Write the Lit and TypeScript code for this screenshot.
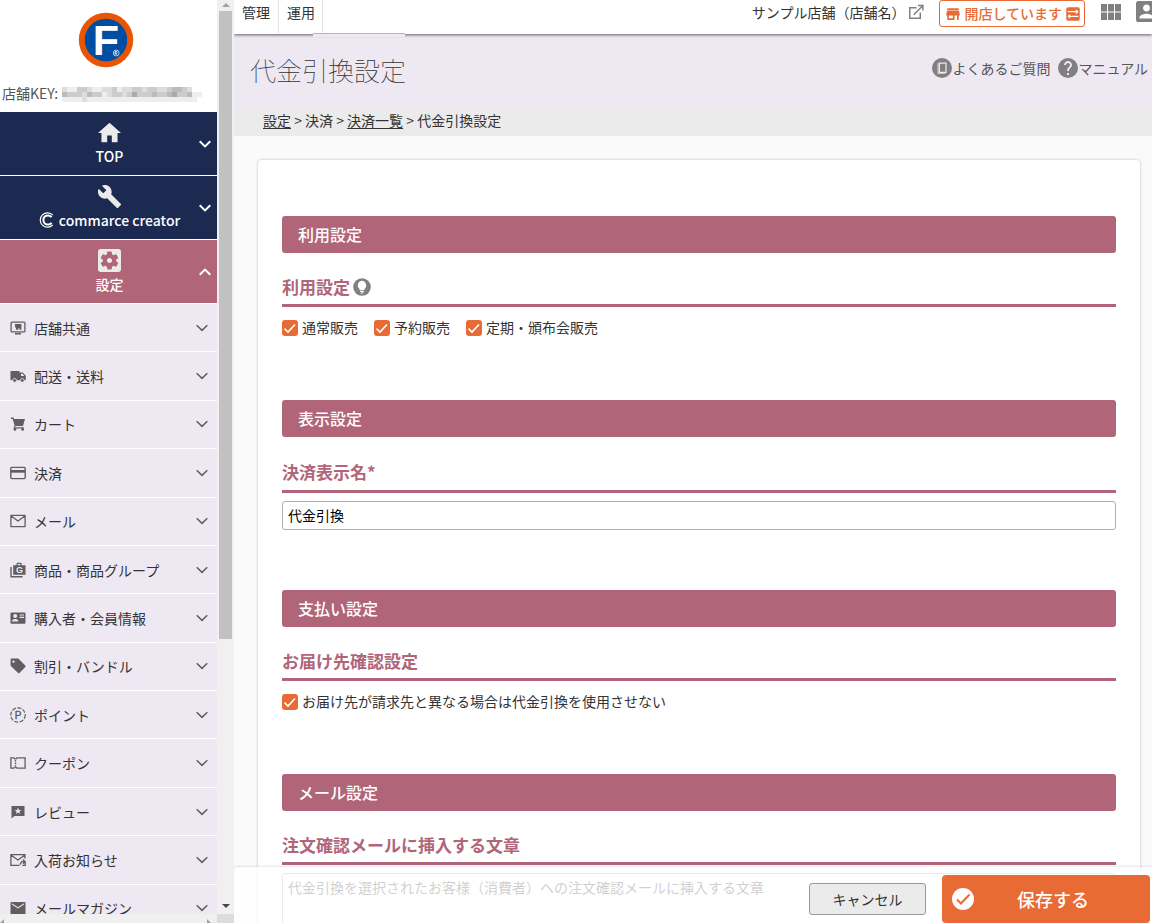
import { LitElement, html, css, svg } from "lit";
import { customElement, property } from "lit/decorators.js";

const icons: Record<string, { box: string; body: unknown }> = {
  home: { box: "2 3 20 17", body: svg`<path d="M10 20v-6h4v6h5v-8h3L12 3 2 12h3v8z"/>` },
  wrench: {
    box: "1 1 22 22",
    body: svg`<path d="M22.7 19l-9.1-9.1c.9-2.3.4-5-1.5-6.9-2-2-5-2.4-7.4-1.3L9 6 6 9 1.6 4.7C.4 7.1.9 10.1 2.9 12.1c1.9 1.9 4.6 2.4 6.9 1.5l9.1 9.1c.4.4 1 .4 1.4 0l2.3-2.3c.5-.4.5-1.1.1-1.4z"/>`,
  },
  gear: {
    box: "3 3 18 18",
    body: svg`<path d="M12 10c-1.1 0-2 .9-2 2s.9 2 2 2 2-.9 2-2-.9-2-2-2zm7-7H5c-1.11 0-2 .9-2 2v14c0 1.1.89 2 2 2h14c1.11 0 2-.9 2-2V5c0-1.1-.89-2-2-2zm-1.75 9c0 .23-.02.46-.05.68l1.48 1.16c.13.11.17.3.08.45l-1.4 2.42c-.09.15-.27.21-.43.15l-1.74-.7c-.36.28-.76.51-1.18.69l-.26 1.85c-.03.17-.18.3-.35.3h-2.8c-.17 0-.32-.13-.35-.29l-.26-1.85c-.43-.18-.82-.41-1.18-.69l-1.74.7c-.16.06-.34 0-.43-.15l-1.4-2.42c-.09-.15-.05-.34.08-.45l1.48-1.16c-.03-.23-.05-.46-.05-.69 0-.23.02-.46.05-.68l-1.48-1.16c-.13-.11-.17-.3-.08-.45l1.4-2.42c.09-.15.27-.21.43-.15l1.74.7c.36-.28.76-.51 1.18-.69l.26-1.85c.03-.17.18-.3.35-.3h2.8c.17 0 .32.13.35.29l.26 1.85c.43.18.82.41 1.18.69l1.74-.7c.16-.06.34 0 .43.15l1.4 2.42c.09.15.05.34-.08.45l-1.48 1.16c.03.23.05.46.05.69z"/>`,
  },
  ccmark: {
    box: "0 0 15 16",
    body: svg`<g fill="none" stroke="currentColor"><path stroke-width="1.2" d="M13.8 3.2A7.200 7.200 0 1 0 13.800 12.800"/><path stroke-width="2" d="M12.600 5.200A4.600 4.600 0 1 0 12.600 10.800"/></g>`,
  },
  down: { box: "0 0 12 8", body: svg`<path fill="none" stroke="currentColor" stroke-width="1.5" d="M.7 1.2 6 6.4l5.3-5.2"/>` },
  downBold: { box: "0 0 12 8", body: svg`<path fill="none" stroke="currentColor" stroke-width="2" d="M.7 1.2 6 6.4l5.3-5.2"/>` },
  upBold: { box: "0 0 12 8", body: svg`<path fill="none" stroke="currentColor" stroke-width="2" d="M.7 6.8 6 1.6l5.3 5.2"/>` },
  monitor: {
    box: "0 0 16 16",
    body: svg`<rect x="1.1" y="2.1" width="13.8" height="9.8" rx="1" fill="none" stroke="currentColor" stroke-width="1.3"/><path d="M5 13h6v1.6H5zM5 4h6.400v5.800H9.400V8.200H8.300v1.600H6V7.600H5z"/>`,
  },
  truck: {
    box: "0 0 16 16",
    body: svg`<path d="M.5 3h9v9.200H.5z"/><path fill-rule="evenodd" d="M9 4.600h3.800l3 3.200v4.400H9zm2 1.100v2.200h3.400l-1.900-2.200z"/><circle cx="4.600" cy="12.400" r="1.900" stroke="#eee8f3" stroke-width=".8"/><circle cx="12.300" cy="12.400" r="1.900" stroke="#eee8f3" stroke-width=".8"/>`,
  },
  cart: {
    box: "0 0 16 16",
    body: svg`<path d="M1 1.6h2.5l.6 1.3H15l-2 7H5.6l-.7 1.3h9v1.2H3.4l1.2-3L2.7 2.9H1z"/><circle cx="5" cy="13.4" r="1.4"/><circle cx="12.6" cy="13.4" r="1.4"/>`,
  },
  card: {
    box: "0 0 16 16",
    body: svg`<rect x=".8" y="2.400" width="14.400" height="11.200" rx="1" fill="none" stroke="currentColor" stroke-width="1.4"/><path d="M1 5h14v2.7H1z"/>`,
  },
  mail: {
    box: "0 0 16 16",
    body: svg`<path fill="none" stroke="currentColor" stroke-width="1.300" stroke-linejoin="round" d="M.9 2.400h14.200v11.200H.9zM1.200 3 8 8l6.800-5"/>`,
  },
  bag: {
    box: "0 0 16 16",
    body: svg`<path fill="none" stroke="currentColor" stroke-width="1.4" d="M1 5v9.7h11.6"/><path fill-rule="evenodd" d="M3.2 3.2h3.3V1.6L7.4.7h3.4l.9.9v1.6h3.8v9.5H3.2zm4.6 0h2.6V1.9H7.8z"/><text x="9.4" y="11.2" text-anchor="middle" font-size="9" font-weight="700" font-family="Liberation Sans, sans-serif" fill="#eee8f3">G</text>`,
  },
  idcard: {
    box: "0 0 16 16",
    body: svg`<path fill-rule="evenodd" d="M1.5 2.4h13q1 0 1 1v9.4q0 1-1 1h-13q-1 0-1-1V3.4q0-1 1-1zM2 11.4h6.4C8.400 9.600 6.300 9 5.200 9S2 9.600 2 11.400zM5.200 4a2 2 0 1 0 0 4 2 2 0 0 0 0-4zm4.400.5v1.100H14V4.500zm0 2.300v1.100H14V6.800z"/>`,
  },
  tag: {
    box: "0 0 16 16",
    body: svg`<path fill-rule="evenodd" d="M1.6.6h6.600L15.300 7.600q.7.7 0 1.400l-5.800 6q-.7.600-1.400 0L.6 7.800V1.600q0-1 1-1zM3.500 2.400a1.200 1.200 0 1 0 0 2.400 1.200 1.200 0 0 0 0-2.400z"/>`,
  },
  point: {
    box: "0 0 16 16",
    body: svg`<circle cx="8" cy="8" r="7.200" fill="none" stroke="currentColor" stroke-width="1.2" stroke-dasharray="4 1.500"/><text x="8.200" y="11.600" text-anchor="middle" font-size="10" font-family="Liberation Sans, sans-serif" stroke="currentColor" stroke-width=".4">P</text>`,
  },
  coupon: {
    box: "0 0 16 16",
    body: svg`<path fill="none" stroke="currentColor" stroke-width="1.300" d="M.9 2.800H4a1.500 1.500 0 0 0 2.900 0h8.200v10.400H6.900a1.500 1.500 0 0 0-2.900 0H.9z"/><path fill="none" stroke="currentColor" stroke-width="1.300" stroke-dasharray="1.600 1" d="M5.500 5v6.500"/>`,
  },
  review: {
    box: "0 0 16 16",
    body: svg`<path fill-rule="evenodd" d="M1.500 2h13v10H4.500l-3 2.400zM8 3.500 7.100 5.900l-2.500.1 2 1.500-.7 2.500L8 8.600l2.100 1.400-.7-2.500 2-1.500-2.500-.1z"/>`,
  },
  mailback: {
    box: "0 0 16 16",
    body: svg`<path fill="none" stroke="currentColor" stroke-width="1.300" d="M9.500 13.400H.9V2.600h14v4M1.200 3.200 7.900 8l6.700-4.800M10 12.600l1.600-3h3.800M12.800 7.600l2.400 2-2.200 2.200M15.200 9.800v3.600h-3"/>`,
  },
  mailfill: {
    box: "0 0 16 16",
    body: svg`<path fill-rule="evenodd" d="M1.500 2h13q1 0 1 1v10.500q0 1-1 1h-13q-1 0-1-1V3q0-1 1-1zm.4 1.200V4.600L8 8.600l6.100-4V3.200L8 7.200z"/>`,
  },
  external: {
    box: "0 0 16 16",
    body: svg`<path fill="none" stroke="currentColor" stroke-width="1.500" d="M8.500 3.700H1.800V14.200H12.300V8.500M5.700 10.700 14.500 2M10 1.500h4.900v4.900"/>`,
  },
  shop: {
    box: "0 0 16 16",
    body: svg`<path fill-rule="evenodd" d="M1.500 1.300h13v2h-13zM1.300 4h13.400l1 4v1.800h-1.200v5H12.500v-5H9.800v5H1.500v-5H.3V8zM3.400 9.800v3.100h4.400V9.800z"/>`,
  },
  swap: {
    box: "0 0 16 16",
    body: svg`<rect x=".3" y=".3" width="15.400" height="15.400" rx="2"/><path fill="none" stroke="#fff" stroke-width="1.300" d="M2 5.300h11.500M2.500 10.700H14M11.300 3.200l2.200 2.100-2.200 2.100M4.700 8.600l-2.200 2.100 2.200 2.100"/>`,
  },
  apps: {
    box: "0 0 20 16",
    body: svg`<path d="M0 0h6v7.500H0zM7 0h6v7.500H7zM14 0h6v7.500h-6zM0 8.500h6V16H0zM7 8.500h6V16H7zM14 8.500h6V16h-6z"/>`,
  },
  account: {
    box: "3 3 18 18",
    body: svg`<path d="M3 5v14c0 1.100.890 2 2 2h14c1.100 0 2-.9 2-2V5c0-1.100-.9-2-2-2H5c-1.110 0-2 .9-2 2zm12 4c0 1.660-1.340 3-3 3s-3-1.340-3-3 1.340-3 3-3 3 1.340 3 3zm-9 8c0-2 4-3.100 6-3.100s6 1.100 6 3.100v1H6v-1z"/>`,
  },
  book: {
    box: "0 0 20 20",
    body: svg`<circle cx="10" cy="10" r="10"/><path fill="#c9c5cd" d="M5.400 5h1.300v9.800h6.800V16H5.400z"/><path fill="none" stroke="#eee8f3" stroke-width="1.200" d="M7.400 5.100h6.600v9.300H7.400z"/>`,
  },
  help: {
    box: "2 2 20 20",
    body: svg`<circle cx="12" cy="12" r="10"/><path fill="#eee8f3" d="M13 19h-2v-2h2v2zm2.070-7.750l-.9.920C13.450 12.900 13 13.500 13 15h-2v-.5c0-1.100.450-2.100 1.170-2.830l1.240-1.260c.370-.360.590-.860.590-1.410 0-1.100-.9-2-2-2s-2 .9-2 2H8c0-2.210 1.790-4 4-4s4 1.790 4 4c0 .880-.360 1.680-.930 2.250z"/>`,
  },
  bulb: {
    box: "0 0 18 18",
    body: svg`<circle cx="9" cy="9" r="8.800"/><path fill="#fff" d="M9 2.800a4.600 4.600 0 0 0-2.400 8.200v1.200h4.800V11A4.600 4.600 0 0 0 9 2.800zM7 12.900h4V14H7zm.8 1.700h2.400v.8H7.800z"/>`,
  },
  saved: {
    box: "0 0 22 22",
    body: svg`<circle cx="11" cy="11" r="11" fill="#fff"/><path fill="none" stroke="#e86b36" stroke-width="2" d="M5 11.500l4 4 8.500-9"/>`,
  },
};

@customElement("ui-icon")
export class UiIcon extends LitElement {
  @property() name = "";

  static styles = css`
    :host {
      display: inline-flex;
      flex: none;
      width: 16px;
      height: 16px;
    }
    .glyph {
      display: block;
      width: 100%;
      height: 100%;
      fill: currentColor;
    }
  `;

  render() {
    const icon = icons[this.name];
    return icon ? html`<svg class="glyph" viewBox=${icon.box} aria-hidden="true">${icon.body}</svg>` : null;
  }
}

const menu = [
  ["monitor", "店舗共通"],
  ["truck", "配送・送料"],
  ["cart", "カート"],
  ["card", "決済"],
  ["mail", "メール"],
  ["bag", "商品・商品グループ"],
  ["idcard", "購入者・会員情報"],
  ["tag", "割引・バンドル"],
  ["point", "ポイント"],
  ["coupon", "クーポン"],
  ["review", "レビュー"],
  ["mailback", "入荷お知らせ"],
  ["mailfill", "メールマガジン"],
];

/* grey levels of the masked shop key, one character per tile */
const mask = [
  "deeccdeeddceddccdccddcbbcd",
  "bcccdbccedccdcacccbccbaccbee",
  "eeeedeeeeeeeeeeeeeeeeeeeeeef",
];

@customElement("side-menu")
export class SideMenu extends LitElement {
  static styles = css`
    :host {
      display: grid;
      grid-template-columns: minmax(0, 1fr) 17px;
      grid-template-rows: minmax(0, 1fr) 9px;
      min-height: 0;
    }
    .panel {
      overflow: hidden;
      background: #fff;
      line-height: 20px;
    }
    .brand {
      display: flex;
      flex-direction: column;
      align-items: center;
      padding: 12px 6px 9px 0;
    }
    .logo {
      width: 56px;
      height: 56px;
    }
    .key {
      display: flex;
      align-items: center;
      align-self: stretch;
      gap: 4px;
      margin-top: 15px;
      padding-left: 2px;
      color: #555;
      white-space: nowrap;
    }
    .mask {
      width: 140px;
      height: 15px;
      margin-top: 2px;
    }
    .head {
      display: grid;
      grid-template-columns: 20px minmax(0, 1fr) 12px;
      align-items: center;
      box-sizing: border-box;
      width: 100%;
      height: 64px;
      padding: 0 6px 0 0;
      border: 0;
      border-bottom: 1px solid #fff;
      background: #1c2951;
      color: #fff;
      font: inherit;
      font-weight: 500;
      line-height: 20px;
    }
    .head.active {
      background: #b06579;
    }
    .stack {
      grid-column: 2;
      display: flex;
      flex-direction: column;
      align-items: center;
      gap: 2px;
      padding-bottom: 1px;
    }
    .stack ui-icon {
      width: 23px;
      height: 23px;
      color: #ebebeb;
    }
    .label {
      display: flex;
      align-items: center;
      gap: 5px;
      white-space: nowrap;
    }
    .label ui-icon {
      width: 15px;
      height: 16px;
      color: #fff;
    }
    .chev {
      width: 12px;
      height: 8px;
    }
    .list {
      display: grid;
      grid-auto-rows: 1fr;
      min-height: 629px;
      margin: 0;
      padding: 0;
      list-style: none;
      background: #eee8f3;
    }
    .row {
      display: grid;
      border-bottom: 1px solid #fff;
    }
    .item {
      display: flex;
      align-items: center;
      gap: 8px;
      padding: 0 9px 0 10px;
      border: 0;
      background: none;
      color: #333;
      font: inherit;
      text-align: left;
      white-space: nowrap;
    }
    .item ui-icon {
      color: #5f5f5f;
    }
    .item .chev {
      margin-left: auto;
    }
    .vbar {
      display: flex;
      flex-direction: column;
      align-items: center;
      padding: 3px 2px 6px;
      background: #f0f0f0;
    }
    .tri {
      flex: none;
      border: 4px solid transparent;
    }
    .up {
      border-top: 0;
      border-bottom-color: #a0a0a0;
    }
    .dn {
      border-bottom: 0;
      border-top-color: #444;
    }
    .track {
      flex: 1;
      align-self: stretch;
      display: grid;
      grid-template-rows: 12fr 5fr;
      padding: 4px 0;
    }
    .thumb {
      background: #c1c1c1;
    }
    .hbar {
      display: flex;
      justify-content: space-between;
      align-items: flex-end;
      overflow: hidden;
      padding-right: 6px;
      background: #f0f0f0;
    }
    .lf {
      border-left: 0;
      border-right-color: #a0a0a0;
      margin-bottom: -4px;
    }
    .rt {
      border-right: 0;
      border-left-color: #a0a0a0;
      margin-bottom: -4px;
    }
    .corner {
      background: #dcdcdc;
    }
  `;

  head(icon: string, label: unknown, active = false) {
    return html`<button class="head ${active ? "active" : ""}" type="button">
      <span class="stack"><ui-icon name=${icon}></ui-icon><span class="label">${label}</span></span>
      <ui-icon class="chev" name=${active ? "upBold" : "downBold"}></ui-icon>
    </button>`;
  }

  render() {
    return html`
      <nav class="panel" aria-label="メニュー">
        <div class="brand">
          <svg class="logo" viewBox="0 0 56 56" role="img" aria-label="F">
            <circle cx="28" cy="28" r="27.200" fill="#ea5504" />
            <circle cx="28" cy="28" r="21.300" fill="#004ea2" />
            <text x="28" y="43" text-anchor="middle" font-family="Liberation Sans, sans-serif" font-weight="700" font-size="43" fill="#fff">F</text>
            <g fill="none" stroke="#fff">
              <circle cx="38.200" cy="41" r="2.900" stroke-width=".7" />
              <path stroke-width=".8" d="M37.200 42.700v-3.300h1.100a.9.900 0 0 1 0 1.800h-1l1.900 1.500" />
            </g>
          </svg>
          <div class="key">
            店舗KEY:
            <svg class="mask" viewBox="0 0 140 15" aria-hidden="true">
              ${mask.map((line, y) =>
                [...line].map((c, x) => svg`<rect x=${x * 5} y=${y * 5} width="5" height="5" fill=${"#" + c.repeat(3)} />`)
              )}
            </svg>
          </div>
        </div>
        ${this.head("home", "TOP")}
        ${this.head("wrench", html`<ui-icon name="ccmark"></ui-icon>commarce creator`)}
        ${this.head("gear", "設定", true)}
        <ul class="list">
          ${menu.map(
            ([icon, label]) => html`<li class="row">
              <button class="item" type="button">
                <ui-icon name=${icon}></ui-icon>${label}<ui-icon class="chev" name="down"></ui-icon>
              </button>
            </li>`
          )}
        </ul>
      </nav>
      <div class="vbar">
        <i class="tri up"></i>
        <div class="track"><div class="thumb"></div></div>
        <i class="tri dn"></i>
      </div>
      <div class="hbar"><i class="tri lf"></i><i class="tri rt"></i></div>
      <div class="corner"></div>
    `;
  }
}

@customElement("app-root")
export class AppRoot extends LitElement {
  static styles = css`
    :host {
      display: grid;
      grid-template-columns: 234px minmax(0, 1fr);
      grid-template-rows: 100vh;
      overflow: hidden;
      background: #fafafa;
      color: #333;
      font-family: "Noto Sans CJK JP", "Noto Sans", sans-serif;
      font-size: 14px;
      line-height: 20px;
    }
    .main {
      position: relative;
      overflow: hidden;
    }
    .top {
      position: relative;
      z-index: 1;
      display: flex;
      align-items: stretch;
      height: 34px;
      background: #fff;
      box-shadow: 0 1px 3px rgba(0, 0, 0, 0.6);
    }
    .tab {
      padding: 2px 7px 12px 8px;
      border-right: 1px solid #e4e4e4;
      color: #333;
      text-decoration: none;
    }
    .tab:first-child {
      padding-right: 8px;
    }
    .drop {
      position: absolute;
      left: 79px;
      top: 33px;
      width: 92px;
      height: 3px;
      border-top: 1px solid #b4b4b4;
      background: #eee8f3;
    }
    .tools {
      display: flex;
      align-items: flex-start;
      flex: none;
      margin-left: auto;
      margin-right: -5px;
      color: #808080;
    }
    .shop {
      display: flex;
      align-items: center;
      gap: 3px;
      margin: 2px 15px 0 0;
      color: #333;
      text-decoration: none;
      white-space: nowrap;
    }
    .shop ui-icon {
      color: #808080;
    }
    .open {
      display: flex;
      align-items: center;
      gap: 4px;
      height: 27px;
      margin-right: 16px;
      padding: 0 4px 2px 6px;
      border: 1px solid #e86b36;
      border-radius: 3px;
      background: #fff;
      color: #e86b36;
      font: inherit;
      font-weight: 500;
      white-space: nowrap;
    }
    .open ui-icon {
      width: 14px;
      height: 14px;
      margin-top: 2px;
    }
    .icon-btn {
      display: flex;
      padding: 0;
      border: 0;
      background: none;
      color: inherit;
    }
    .apps {
      width: 20px;
      height: 16px;
      margin: 4px 15px 0 0;
    }
    .user {
      width: 21px;
      height: 21px;
      margin-top: 1px;
    }
    .title {
      display: flex;
      justify-content: space-between;
      align-items: flex-start;
      padding: 18px 4px 17px 16px;
      background: #eee8f3;
    }
    .title h1 {
      margin: 0;
      font-size: 26px;
      font-weight: 100;
      line-height: 36px;
    }
    .links {
      display: flex;
      gap: 8px;
      margin-top: 6px;
    }
    .link {
      display: flex;
      align-items: center;
      color: #555;
      text-decoration: none;
    }
    .link ui-icon {
      width: 20px;
      height: 20px;
      color: #808080;
    }
    .crumbs {
      padding: 5px 29px 6px;
      background: #ebebeb;
    }
    .crumbs a {
      color: inherit;
      text-underline-offset: 2px;
    }
    .card {
      margin: 24px 12px 0 24px;
      padding: 56px 24px 0;
      border-radius: 4px;
      background: #fff;
      box-shadow: 0 0 3px rgba(0, 0, 0, 0.25);
    }
    .section {
      padding-bottom: 60px;
    }
    .bar {
      margin: 0;
      padding: 6px 16px;
      border-radius: 3px;
      background: #b06579;
      color: #fff;
      font-size: 16px;
      font-weight: 500;
      line-height: 25px;
    }
    .sub {
      display: flex;
      align-items: center;
      gap: 3px;
      margin: 0 0 8px;
      padding: 21px 0 5px;
      border-bottom: 3px solid #b06579;
      color: #b06579;
      font-size: 17px;
      font-weight: 700;
      line-height: 25px;
    }
    .sub ui-icon {
      width: 18px;
      height: 18px;
      color: #808080;
    }
    .need {
      line-height: 27px;
    }
    .checks {
      display: flex;
      gap: 16px;
    }
    .check {
      display: flex;
      align-items: center;
      gap: 4px;
      line-height: 25px;
    }
    .box {
      appearance: none;
      width: 16px;
      height: 16px;
      margin: 0;
      border: 1px solid #999;
      border-radius: 3px;
      background: #fff;
    }
    .box:checked {
      border: 0;
      background: #e86b36
        url("data:image/svg+xml,%3Csvg xmlns='http://www.w3.org/2000/svg' viewBox='0 0 16 16'%3E%3Cpath d='M2.500 8.700l3.500 3.300 7-7.500' fill='none' stroke='%23fff' stroke-width='1.600'/%3E%3C/svg%3E");
    }
    .field {
      display: block;
      box-sizing: border-box;
      width: 100%;
      margin: 0;
      padding: 3px 5px 4px;
      border: 1px solid #b0b0b0;
      border-radius: 3px;
      background: #fff;
      color: #000;
      font: inherit;
      resize: none;
    }
    input.field {
      height: 29px;
    }
    .field::placeholder {
      color: #444;
      opacity: 1;
    }
    .actions {
      position: absolute;
      inset: auto 0 0 0;
      z-index: 1;
      display: flex;
      align-items: center;
      justify-content: flex-end;
      gap: 16px;
      padding: 8px 2px 0 0;
      border-radius: 4px 0 0 0;
      background: rgba(255, 255, 255, 0.75);
      box-shadow: 0 0 3px rgba(0, 0, 0, 0.2);
    }
    .cancel {
      width: 117px;
      padding: 5px 0;
      border: 1px solid #999;
      border-radius: 3px;
      background: #ebebeb;
      color: #333;
      font: inherit;
    }
    .save {
      display: grid;
      grid-template-columns: 22px 1fr;
      align-items: center;
      width: 208px;
      height: 48px;
      padding: 0 18px 0 10px;
      border: 0;
      border-radius: 4px;
      background: #e86b36;
      color: #fff;
      font: inherit;
      font-size: 18px;
      font-weight: 500;
    }
    .save ui-icon {
      width: 22px;
      height: 22px;
    }
  `;

  check(label: string) {
    return html`<label class="check"><input class="box" type="checkbox" checked />${label}</label>`;
  }

  render() {
    return html`
      <side-menu></side-menu>
      <div class="main">
        <header class="top">
          <a class="tab" href="#">管理</a>
          <a class="tab" href="#">運用</a>
          <div class="drop"></div>
          <div class="tools">
            <a class="shop" href="#">サンプル店舗（店舗名）<ui-icon name="external"></ui-icon></a>
            <button class="open" type="button"><ui-icon name="shop"></ui-icon>開店しています<ui-icon name="swap"></ui-icon></button>
            <button class="icon-btn" type="button" aria-label="アプリ"><ui-icon class="apps" name="apps"></ui-icon></button>
            <button class="icon-btn" type="button" aria-label="アカウント"><ui-icon class="user" name="account"></ui-icon></button>
          </div>
        </header>
        <div class="title">
          <h1>代金引換設定</h1>
          <div class="links">
            <a class="link" href="#"><ui-icon name="book"></ui-icon>よくあるご質問</a>
            <a class="link" href="#"><ui-icon name="help"></ui-icon>マニュアル</a>
          </div>
        </div>
        <nav class="crumbs"><a href="#">設定</a> &gt; 決済 &gt; <a href="#">決済一覧</a> &gt; 代金引換設定</nav>
        <main class="card">
          <section class="section">
            <h2 class="bar">利用設定</h2>
            <h3 class="sub">利用設定<ui-icon name="bulb"></ui-icon></h3>
            <div class="checks">${["通常販売", "予約販売", "定期・頒布会販売"].map((t) => this.check(t))}</div>
          </section>
          <section class="section">
            <h2 class="bar">表示設定</h2>
            <h3 class="sub"><label class="need" for="name">決済表示名*</label></h3>
            <input class="field" id="name" type="text" value="代金引換" />
          </section>
          <section class="section">
            <h2 class="bar">支払い設定</h2>
            <h3 class="sub">お届け先確認設定</h3>
            <div class="checks">${this.check("お届け先が請求先と異なる場合は代金引換を使用させない")}</div>
          </section>
          <section class="section">
            <h2 class="bar">メール設定</h2>
            <h3 class="sub"><label for="note">注文確認メールに挿入する文章</label></h3>
            <textarea class="field" id="note" rows="5" placeholder="代金引換を選択されたお客様（消費者）への注文確認メールに挿入する文章"></textarea>
          </section>
        </main>
        <footer class="actions">
          <button class="cancel" type="button">キャンセル</button>
          <button class="save" type="button"><ui-icon name="saved"></ui-icon>保存する</button>
        </footer>
      </div>
    `;
  }
}
